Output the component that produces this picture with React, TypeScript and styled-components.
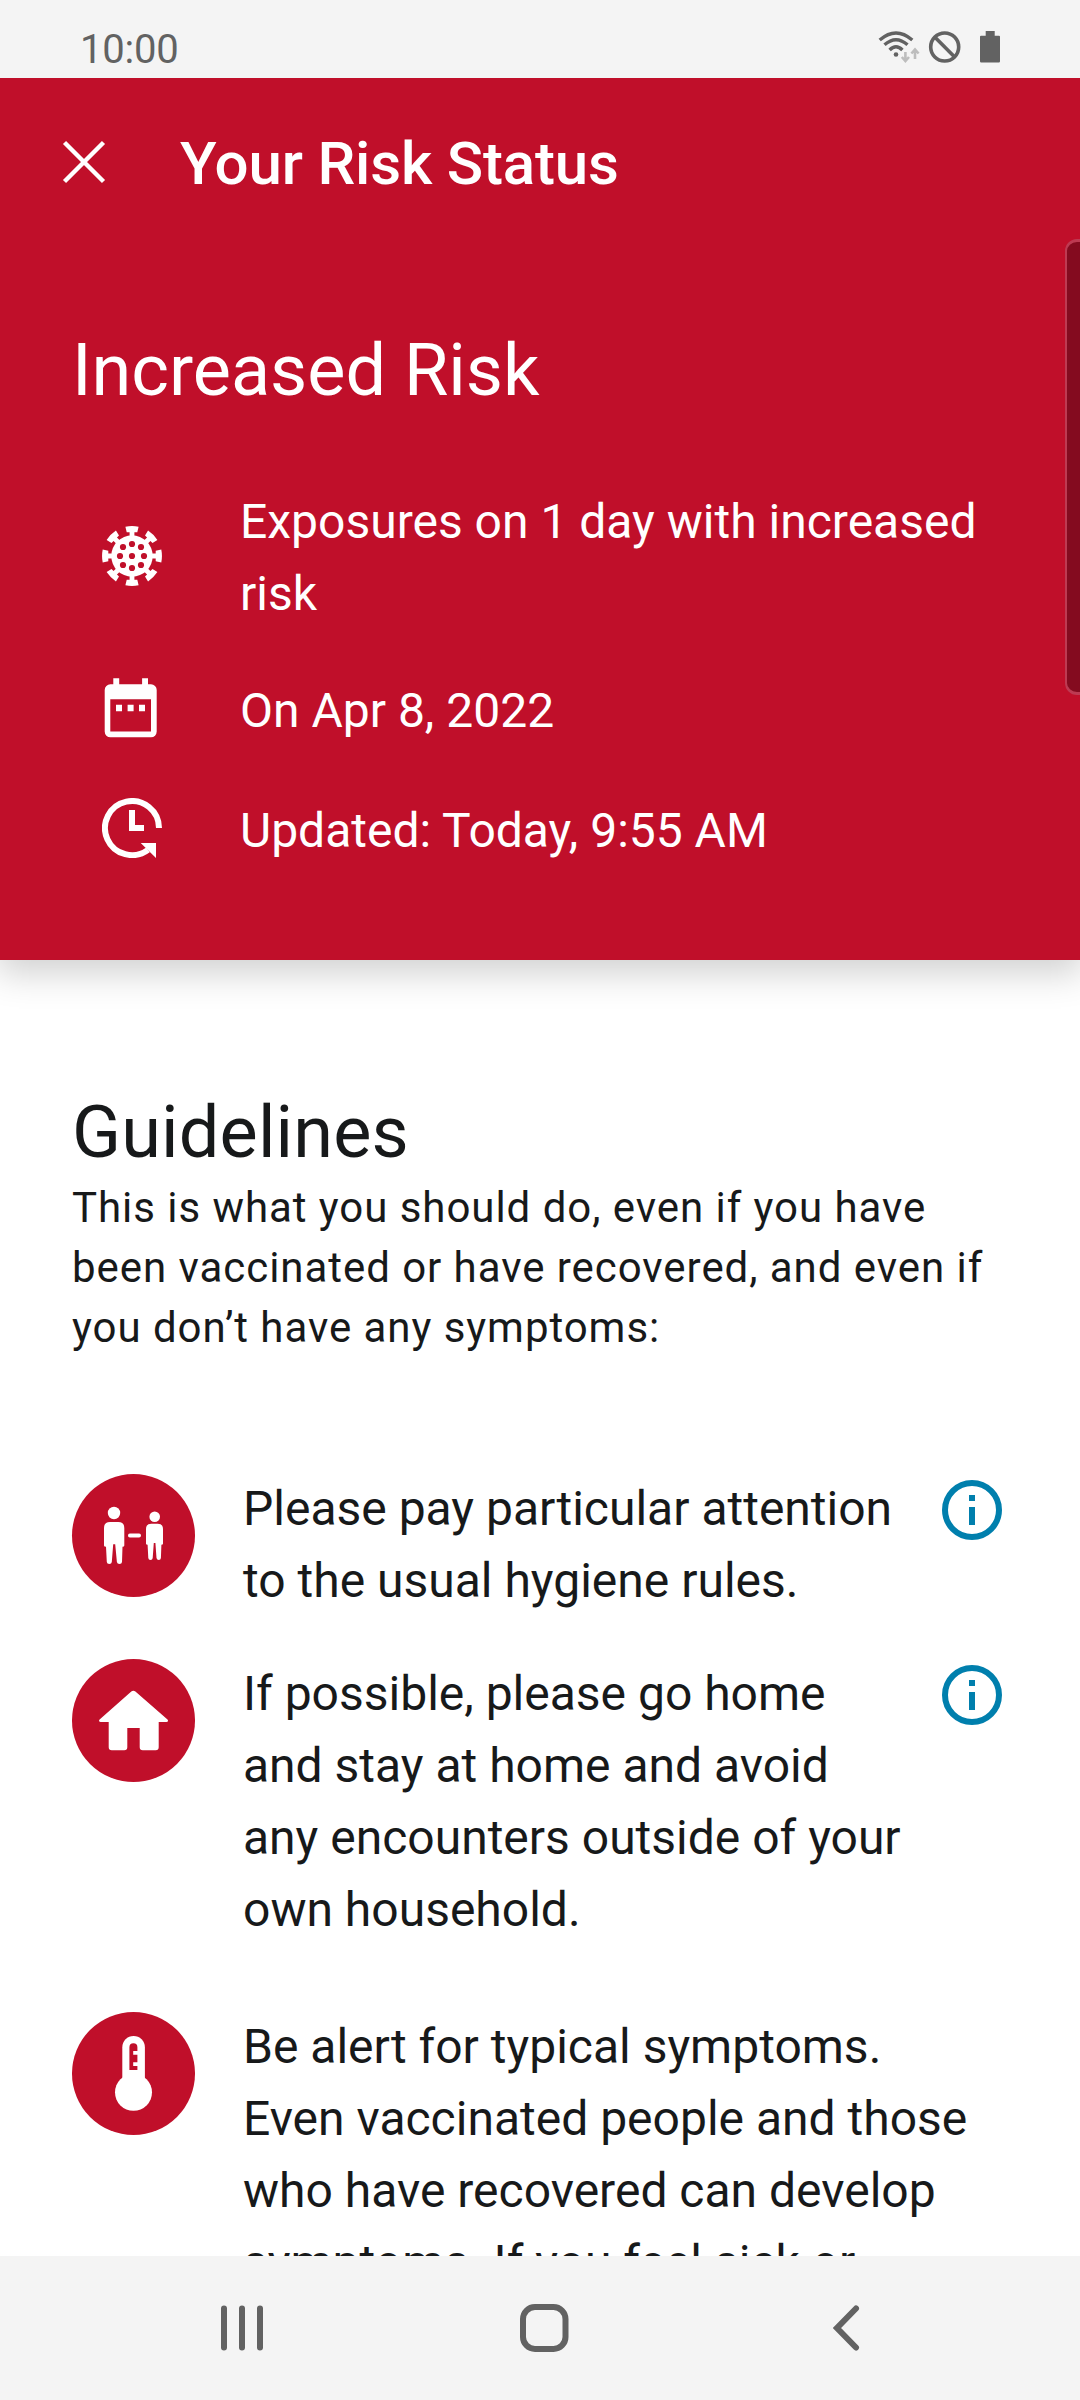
import React from "react";
import styled, { createGlobalStyle } from "styled-components";

const red = "#c00f2a";
const ink = "#17191a";
const chrome = "#f4f4f4";
const glyph = "#626262";

const GlobalStyle = createGlobalStyle`
  *, *::before, *::after { box-sizing: border-box; }
  html, body { margin: 0; padding: 0; background: #fff; }
  body { font-family: Roboto, "Noto Sans", sans-serif; color: ${ink}; }
  h1, h2, p, ul { margin: 0; padding: 0; font-weight: 400; }
  svg { display: block; flex: none; }
  button { border: 0; padding: 0; background: none; cursor: pointer; flex: none; }
`;

const Screen = styled.div`
  position: relative;
  display: flex;
  flex-direction: column;
  width: 1080px;
  height: 2400px;
  overflow: hidden;
  background: #fff;
`;

const StatusBar = styled.div`
  position: relative;
  z-index: 1;
  flex: none;
  display: flex;
  justify-content: space-between;
  height: 78px;
  padding: 0 75px 0 80px;
  background: ${chrome};
  color: ${glyph};
`;

const Clock = styled.span`
  font-size: 40px;
  line-height: 100px;
  letter-spacing: -0.2px;
`;

const StatusIcons = styled.div`
  display: flex;
  padding-top: 28px;
`;

const Header = styled.header`
  flex: none;
  height: 882px;
  background: ${red};
  color: #fff;
  box-shadow: 0 10px 34px 3px rgba(0, 0, 0, 0.19);
`;

const Toolbar = styled.div`
  display: flex;
  align-items: center;
  height: 168px;
  padding: 0 60px;
`;

const Title = styled.h1`
  margin-left: 72px;
  padding-top: 4px;
  font-size: 60px;
  line-height: 84px;
  font-weight: 500;
  letter-spacing: -0.16px;
`;

const Headline = styled.h2<{ $top: number; $tracking?: number }>`
  margin: ${(p) => p.$top}px 72px 0;
  font-size: 72px;
  line-height: 90px;
  letter-spacing: ${(p) => p.$tracking ?? 0}px;
`;

const Facts = styled.div`
  display: flex;
  flex-direction: column;
  padding: 66px 72px 0 102px;
`;

const Fact = styled.div<{ $gap?: number }>`
  display: flex;
  align-items: center;
  margin-top: ${(p) => p.$gap ?? 0}px;
`;

const FactText = styled.p<{ $drop?: number }>`
  flex: 1;
  margin-left: 78px;
  padding-top: ${(p) => p.$drop ?? 6}px;
  font-size: 48px;
  line-height: 72px;
`;

const Content = styled.main`
  flex: 1;
  min-height: 0;
  overflow: hidden;
`;

const Intro = styled.p`
  margin: 0 72px;
  font-size: 42px;
  line-height: 60px;
  letter-spacing: 0.95px;
`;

const Guidelines = styled.div`
  display: flex;
  flex-direction: column;
  margin-top: 116px;
  padding: 0 72px;
`;

const Guideline = styled.div<{ $gap?: number }>`
  display: flex;
  align-items: flex-start;
  margin-top: ${(p) => p.$gap ?? 0}px;
`;

const Badge = styled.div`
  flex: none;
  width: 123px;
  height: 123px;
  border-radius: 50%;
  background: ${red};
`;

const GuidelineText = styled.p`
  flex: 1;
  margin: -1px 24px 0 48px;
  font-size: 48px;
  line-height: 72px;
`;

const InfoButton = styled.button`
  margin: 6px 6px 0 12px;
`;

const NavBar = styled.nav`
  flex: none;
  display: flex;
  align-items: center;
  justify-content: space-between;
  height: 144px;
  padding: 0 217px;
  background: ${chrome};
`;

const NavButton = styled.button<{ $shift?: number }>`
  margin-right: ${(p) => p.$shift ?? 0}px;
`;

const EdgeHandle = styled.div`
  position: absolute;
  top: 239px;
  right: -12px;
  width: 27px;
  height: 456px;
  border: 2px solid #bd3a52;
  border-width: 3px 2px;
  border-radius: 12px;
  background: #840b1f;
`;

const StatusGlyphs = () => (
  <svg width="130" height="40" viewBox="875 28 130 40" fill="none" stroke={glyph}>
    <g strokeWidth="3.4">
      <path d="M879.7 40Q896 26 912.3 40" />
      <path d="M884.5 44.8Q896 34.5 907.5 44.8" />
      <path d="M889.6 50Q896 43.5 902.4 50" />
    </g>
    <circle cx="896" cy="54.5" r="2.3" fill={glyph} stroke="none" />
    <g stroke="#bdbdbd" strokeWidth="2.6">
      <path d="M905.4 52V60.5M901.8 57l3.6 4 3.6-4M915 59V50M911.4 53.5l3.6-4 3.6 4" />
    </g>
    <circle cx="944.7" cy="47" r="14" strokeWidth="3.6" />
    <path d="M935 37.3L954.4 56.7" strokeWidth="3.6" />
    <path
      d="M985.7 31h9v4.700h4.300a1 1 0 0 1 1 1v24.600a1.200 1.200 0 0 1-1.200 1.200h-17.600a1.200 1.200 0 0 1-1.200-1.200V36.700a1 1 0 0 1 1-1h4.700z"
      fill={glyph}
      stroke="none"
    />
  </svg>
);

const CloseIcon = () => (
  <svg width="48" height="48" viewBox="0 0 48 48" stroke="#fff" strokeWidth="4.4">
    <path d="M4.500 4.500L43.500 43.500M43.500 4.500L4.500 43.500" />
  </svg>
);

const VirusIcon = () => (
  <svg width="60" height="60" viewBox="-30 -30 60 60" fill="#fff">
    <circle r="20.7" />
    {[0, 45, 90, 135, 180, 225, 270, 315].map((a) => (
      <path
        key={a}
        transform={`rotate(${a})`}
        d="M-6.600-29.300Q0-30.600 6.600-29.300L5.300-23.700H2.400V-19H-2.400V-23.700H-5.300Z"
      />
    ))}
    <g fill={red}>
      <circle r="3.1" />
      {[0, 90, 180, 270].map((a) => (
        <g key={a} transform={`rotate(${a})`}>
          <circle cx="12" r="3.1" />
          <circle cx="9" cy="9" r="3.1" />
        </g>
      ))}
    </g>
  </svg>
);

const CalendarIcon = () => (
  <svg width="60" height="60" viewBox="102 678 60 60" fill="#fff">
    <path
      fillRule="evenodd"
      d="M113.300 678.300h5.900v6h22.900v-6h5.900v6h3a5.700 5.700 0 0 1 5.700 5.700v41.600a5.700 5.700 0 0 1-5.700 5.700h-40.600a5.700 5.700 0 0 1-5.700-5.700V690a5.700 5.700 0 0 1 5.700-5.700h2.900zM110.300 699.200v32.400h40.700v-32.400z"
    />
    <path d="M116 704.800h6v6.400h-6zM127.600 704.800h6v6.400h-6zM139 704.800h6v6.400h-6z" />
  </svg>
);

const UpdatedIcon = () => (
  <svg width="60" height="60" viewBox="0 0 60 60" fill="#fff">
    <path d="M57 30A27 27 0 1 0 46 51.800" fill="none" stroke="#fff" strokeWidth="6" />
    <path d="M38.700 45H54V60zM27 12h6v15h9v6H27z" />
  </svg>
);

const DistanceIcon = () => (
  <svg width="123" height="123" viewBox="0 0 123 123" fill="#fff">
    <circle cx="42" cy="39" r="6.200" />
    <path d="M38 48h8.300q6 0 6 6v17.400q0 1.300-1.800 1.300L50 88q-.2 2-2.500 2t-2.600-2L43.200 70.300h-2L39.800 88q-.2 2-2.500 2t-2.500-2L34 72.700q-2 0-2-1.300V54q0-6 6-6z" />
    <circle cx="82.700" cy="42.700" r="5.300" />
    <path d="M79.300 49.700h6.400q5.300 0 5.300 5.300v14.700q0 1-1.600 1L88.900 84q-.2 2-2.100 2t-2.300-2L83.400 69h-1.600L80.700 84q-.2 2-2.200 2t-2.200-2L75.600 70.700q-1.600 0-1.600-1V55q0-5.300 5.300-5.300z" />
    <rect x="56" y="59.600" width="13" height="3.800" rx="1.900" />
  </svg>
);

const HomeIcon = () => (
  <svg width="123" height="123" viewBox="0 0 123 123" fill="#fff">
    <path d="M59.300 32.500q2-1.700 4.100 0L95.200 60.200q1 .9.800 1.700-.2 1-1.600 1H86.700V88.300q0 3-3 3H70.700q-3 0-3-3V69H55.300V88.300q0 3-3 3H39.700q-3 0-3-3V62.900H28.700q-1.400 0-1.600-1-.2-.8.800-1.700z" />
  </svg>
);

const ThermometerIcon = () => (
  <svg width="123" height="123" viewBox="0 0 123 123" fill="#fff">
    <circle cx="61.500" cy="80.300" r="18.500" />
    <path d="M50.300 35.300a11.300 11.300 0 0 1 22.600 0V70H50.300z" />
    <path
      d="M57.400 35.200a4 4 0 0 1 8 0V39H61.200v3.800h4.200v7.500H61.200V54h4.200v4h-8z"
      fill={red}
    />
  </svg>
);

const InfoIcon = () => (
  <svg width="60" height="60" viewBox="0 0 60 60" fill="#007fad">
    <circle cx="30" cy="30" r="27" fill="none" stroke="#007fad" strokeWidth="6" />
    <path d="M27 15h6v6h-6zM27 27h6v18h-6z" />
  </svg>
);

const RecentsIcon = () => (
  <svg width="50" height="50" viewBox="0 0 50 50" stroke={glyph} strokeWidth="6" strokeLinecap="round">
    <path d="M7 5.500V44.500M25 5.500V44.500M43 5.500V44.500" />
  </svg>
);

const NavHomeIcon = () => (
  <svg width="50" height="50" viewBox="0 0 50 50" fill="none" stroke={glyph} strokeWidth="6">
    <rect x="4" y="4" width="42.500" height="42" rx="12" />
  </svg>
);

const BackIcon = () => (
  <svg width="30" height="50" viewBox="0 0 30 50" fill="none" stroke={glyph} strokeWidth="6" strokeLinecap="round">
    <path d="M23 5.500L4 25L23 44.500" />
  </svg>
);

const guidelines = [
  {
    icon: <DistanceIcon />,
    text: "Please pay particular attention to the usual hygiene rules.",
    info: true,
    gap: 0,
  },
  {
    icon: <HomeIcon />,
    text: "If possible, please go home and stay at home and avoid any encounters outside of your own household.",
    info: true,
    gap: 42,
  },
  {
    icon: <ThermometerIcon />,
    text: "Be alert for typical symptoms. Even vaccinated people and those who have recovered can develop symptoms. If you feel sick or",
    info: false,
    gap: 66,
  },
];

export default function App() {
  return (
    <>
      <GlobalStyle />
      <Screen>
        <StatusBar>
          <Clock>10:00</Clock>
          <StatusIcons>
            <StatusGlyphs />
          </StatusIcons>
        </StatusBar>
        <Header>
          <Toolbar>
            <button aria-label="Close">
              <CloseIcon />
            </button>
            <Title>Your Risk Status</Title>
          </Toolbar>
          <Headline $top={80}>Increased Risk</Headline>
          <Facts>
            <Fact>
              <VirusIcon />
              <FactText $drop={4}>Exposures on 1 day with increased risk</FactText>
            </Fact>
            <Fact $gap={39}>
              <CalendarIcon />
              <FactText>On Apr 8, 2022</FactText>
            </Fact>
            <Fact $gap={42}>
              <UpdatedIcon />
              <FactText>Updated: Today, 9:55 AM</FactText>
            </Fact>
          </Facts>
        </Header>
        <Content>
          <Headline $top={128} $tracking={0.18}>
            Guidelines
          </Headline>
          <Intro>
            This is what you should do, even if you have been vaccinated or have recovered, and even if
            you don’t have any symptoms:
          </Intro>
          <Guidelines>
            {guidelines.map((g) => (
              <Guideline key={g.text} $gap={g.gap}>
                <Badge>{g.icon}</Badge>
                <GuidelineText>{g.text}</GuidelineText>
                {g.info && (
                  <InfoButton aria-label="More information">
                    <InfoIcon />
                  </InfoButton>
                )}
              </Guideline>
            ))}
          </Guidelines>
        </Content>
        <NavBar>
          <NavButton aria-label="Recents">
            <RecentsIcon />
          </NavButton>
          <NavButton aria-label="Home" $shift={12}>
            <NavHomeIcon />
          </NavButton>
          <NavButton aria-label="Back">
            <BackIcon />
          </NavButton>
        </NavBar>
        <EdgeHandle />
      </Screen>
    </>
  );
}
